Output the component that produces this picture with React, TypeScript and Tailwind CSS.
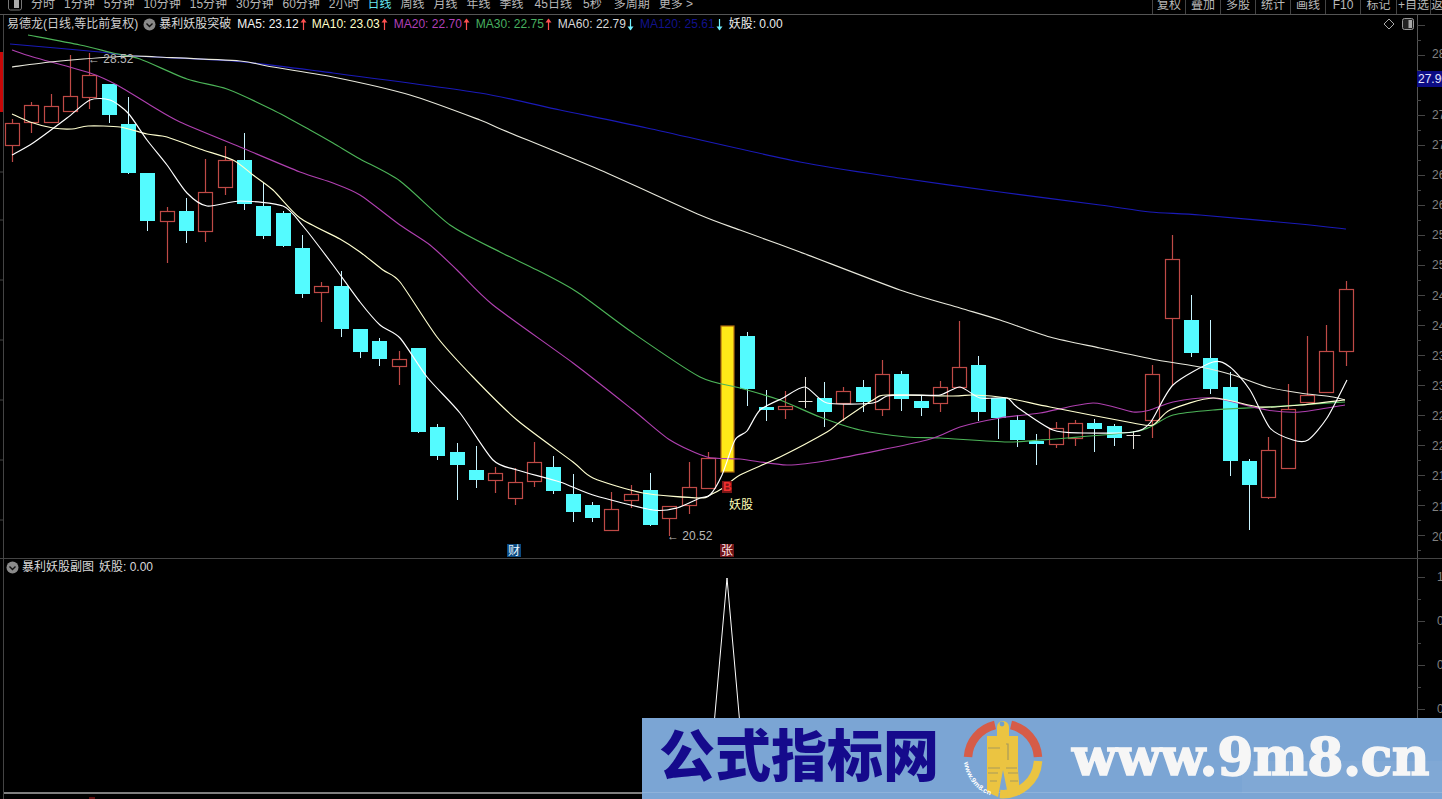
const C: [string, number, number, number, number][] = [
["r",119,123,145,162],["r",102,105,122,133],["r",94,106,122,122],["r",55,96,111,111],["r",53,75,97,109],
["c",84,84,115,123],["c",97,124,173,174],["c",173,173,221,231],["r",207,211,221,263],["c",198,211,231,243],
["r",159,192,231,242],["r",146,160,187,195],["c",133,160,204,210],["c",183,206,236,239],["c",211,213,246,247],
["c",235,248,294,298],["r",282,286,292,322],["c",271,286,329,337],["c",329,329,352,358],["c",338,341,359,366],
["r",351,359,366,385],["c",348,348,432,433],["c",424,427,456,460],["c",443,452,465,500],["c",446,470,480,488],
["r",467,473,480,493],["r",468,482,498,505],["r",442,462,481,487],["c",456,467,491,494],["c",474,494,512,522],
["c",502,505,518,522],["r",492,509,530,530],["r",485,494,500,508],["c",473,490,525,526],["r",506,506,518,536],
["r",462,487,505,514],["r",452,458,488,488],["y",326,326,472,472],["c",332,336,389,406],["c",390,407,410,421],
["r",391,406,409,419],["d",377,401,401,408],["c",382,398,412,427],["r",387,391,403,421],["c",380,387,402,412],
["r",360,374,409,416],["c",371,374,399,411],["c",396,401,408,416],["r",381,387,403,412],["r",321,367,387,387],
["c",356,365,412,421],["c",398,398,418,439],["c",415,420,440,447],["c",434,441,444,465],["r",422,428,444,448],
["r",420,423,438,446],["c",419,423,429,452],["c",424,426,438,446],["d",431,435,435,449],["r",365,374,420,438],
["r",235,259,318,385],["c",295,320,353,357],["c",320,358,389,394],["c",372,387,461,476],["c",459,461,485,530],
["r",437,450,497,499],["r",384,409,468,468],["r",336,395,402,402],["r",325,351,392,392],["r",281,289,351,366],
];

const MA120 = "10,44 100,52 133,56 233,61 333,73 480,93 560,110 647,128 800,162 900,178 1000,192 1100,205 1150,212 1200,215 1300,224 1346,229";
const MA60 = "12,67 50,62 83,59 133,56 157,57 240,61 267,66 333,77 410,95 480,120 503,130 600,170 700,215 740,230 800,252 900,290 960,308 1000,320 1050,337 1100,348 1157,360 1200,367 1233,375 1267,387 1300,393 1333,397 1345,400";
const MA30 = "28,35 80,45 113,53 140,59 187,79 227,89 273,110 310,130 333,143 360,159 400,181 450,225 500,252 537,270 577,292 633,333 700,377 740,388 780,400 820,417 860,430 907,437 940,438 1007,442 1040,440 1067,438 1133,432 1150,427 1173,415 1213,410 1267,407 1345,402";
const MA20 = "12,50 33,57 90,73 117,85 150,105 180,122 240,147 300,172 333,183 360,195 400,225 430,245 457,270 493,305 573,363 633,410 670,440 707,457 740,459 787,465 830,460 927,440 960,427 1000,418 1040,413 1093,403 1133,412 1150,410 1173,402 1213,398 1267,410 1300,412 1345,405";
const MA10 = "12,114 30,122 53,128 72,129 88,126 120,127 147,134 167,137 200,149 233,160 253,175 273,190 300,218 340,239 360,252 383,270 400,282 437,337 473,377 517,420 573,462 593,478 643,493 700,498 710,495 723,488 740,475 780,457 827,432 840,422 873,400 887,395 953,396 973,395 1007,398 1050,407 1133,423 1153,425 1170,410 1213,398 1260,407 1300,405 1345,400";
const MA5 = "12,155 33,143 67,118 90,100 110,100 128,113 147,140 167,165 187,193 207,206 240,201 283,206 303,226 333,265 360,302 380,325 400,338 427,377 460,413 493,460 517,470 560,482 593,495 653,510 677,508 700,498 710,495 722,475 735,440 747,431 760,410 783,398 805,387 827,403 873,403 887,396 910,395 940,395 960,387 980,398 1007,398 1017,407 1053,430 1083,433 1133,432 1150,423 1173,385 1213,362 1230,367 1250,390 1270,428 1293,440 1308,440 1327,418 1347,380";

const upperLabels: [string, number][] = [["28",54],["27",115],["27",145],["26",175],["26",205],["25",235],["25",265],["24",296],["24",326],["23",356],["23",386],["22",416],["22",446],["21",476],["21",507],["20",537]];

const sans = "font-['Liberation_Sans','Noto_Sans_CJK_SC',sans-serif]";

function smooth(pts: string) {
  const p = pts.split(" ").map((s) => s.split(",").map(Number));
  let d = `M${p[0][0]} ${p[0][1]}`;
  for (let i = 0; i < p.length - 1; i++) {
    const a = p[Math.max(i - 1, 0)], b = p[i], c = p[i + 1], e = p[Math.min(i + 2, p.length - 1)];
    const k = 1 / 8;
    d += ` C${b[0] + (c[0] - a[0]) * k} ${b[1] + (c[1] - a[1]) * k} ${c[0] - (e[0] - b[0]) * k} ${c[1] - (e[1] - b[1]) * k} ${c[0]} ${c[1]}`;
  }
  return d;
}

function Arrow({ up }: { up: boolean }) {
  const color = up ? "#ff5050" : "#70f0ff";
  return (
    <svg width="7" height="13" viewBox="0 0 7 13" className="block shrink-0">
      <line x1="3.5" y1="1" x2="3.5" y2="12" stroke={color} strokeWidth="1.2" />
      {up ? <path d="M0.5 4.5 L3.5 0.5 L6.5 4.5 Z" fill={color} /> : <path d="M0.5 8.5 L3.5 12.5 L6.5 8.5 Z" fill={color} />}
    </svg>
  );
}

function Chevron() {
  return (
    <svg width="13" height="13" viewBox="0 0 13 13" className="block shrink-0">
      <circle cx="6.5" cy="6.5" r="6" fill="#8a8a8a" />
      <path d="M3.5 5.5 L6.5 8.5 L9.5 5.5" fill="none" stroke="#111" strokeWidth="1.4" />
    </svg>
  );
}

function Candles() {
  return (
    <>
      {C.map(([t, wt, bt, bb, wb], i) => {
        const x = Math.round(12 + i * 19.33) + 0.5;
        if (t === "y") return <rect key={i} x={x - 6.5} y={bt} width={13} height={bb - bt} fill="#ffe818" stroke="#b06a10" strokeWidth="1.2" />;
        if (t === "d") return (
          <g key={i} stroke="#e6e0d8" strokeWidth="1">
            <line x1={x} y1={wt} x2={x} y2={wb} />
            <line x1={x - 7} y1={bt + 0.5} x2={x + 7} y2={bt + 0.5} />
          </g>
        );
        if (t === "c") return (
          <g key={i}>
            <line x1={x} y1={wt} x2={x} y2={wb} stroke="#c8f4ff" strokeWidth="1" />
            <rect x={x - 7.5} y={bt} width={15} height={bb - bt} fill="#54fbff" />
          </g>
        );
        return (
          <g key={i} stroke="#bf4a46" strokeWidth="1.2">
            <line x1={x} y1={wt} x2={x} y2={bt} />
            <line x1={x} y1={bb} x2={x} y2={wb} />
            <rect x={x - 7} y={bt + 0.5} width={14} height={bb - bt} fill="none" />
          </g>
        );
      })}
    </>
  );
}

function Line({ pts, color }: { pts: string; color: string }) {
  return <path d={smooth(pts)} fill="none" stroke={color} strokeWidth="1.15" />;
}

function Ticks({ from, to, step }: { from: number; to: number; step: number }) {
  const items = [];
  for (let y = from, i = 0; y <= to; y += step, i++) {
    items.push(<line key={y} x1="0" x2={i % 2 === 0 ? 8 : 4} y1={y + 0.5} y2={y + 0.5} stroke="#444" />);
  }
  return <>{items}</>;
}

const left = ["分时","1分钟","5分钟","10分钟","15分钟","30分钟","60分钟","2小时","日线","周线","月线","年线","季线","45日线","5秒","多周期","更多 >"];
const right: [string, string][] = [["复权","w-[33px]"],["叠加","w-[35px]"],["多股","w-[35px]"],["统计","w-[35px]"],["画线","w-[35px]"],["F10","w-[35px]"],["标记","w-[36px]"],["+自选","w-[34px]"],["返","w-[12px]"]];

const legend: [string, string, boolean, string][] = [
  ["MA5: 23.12", "text-[#f4f4f4]", true, "ml-[6px]"],
  ["MA10: 23.03", "text-[#ffffc8]", true, "ml-[5px]"],
  ["MA20: 22.70", "text-[#b040b8]", true, "ml-[6px]"],
  ["MA30: 22.75", "text-[#48b060]", true, "ml-[6px]"],
  ["MA60: 22.79", "text-[#d8d8d8]", false, "ml-[6px]"],
  ["MA120: 25.61", "text-[#12128c]", false, "ml-[6px]"],
];

export default function App() {
  return (
    <div className={`relative flex h-[799px] w-[1442px] flex-col overflow-hidden bg-black text-[12px] ${sans}`}>
      {/* toolbar */}
      <div className="flex h-[15px] shrink-0 items-start justify-between overflow-hidden border-b border-[#555]">
        <div className="flex items-start">
          <svg width="14" height="12" viewBox="0 0 14 12" className="ml-[8px] block shrink-0">
            <rect x="0.5" y="-3" width="13" height="13" rx="2" fill="none" stroke="#777" />
            <rect x="6" y="-1" width="5" height="9" fill="#aaa" />
          </svg>
          <div className="ml-[9px] -mt-[3px] flex gap-[9px] leading-[14px] text-[#b8b8b8]">
            {left.map((l) => (
              <span key={l} className={`whitespace-pre ${l === "日线" ? "-ml-[1px] text-[#66e6f0]" : ""} ${l === "45日线" || l === "5秒" ? "ml-[2px]" : ""} ${l === "多周期" ? "ml-[3px]" : ""}`}>{l}</span>
            ))}
          </div>
        </div>
        <div className="flex h-[14px] shrink-0">
          {right.map(([l, w]) => (
            <div key={l} className={`${w} h-[14px] overflow-hidden whitespace-nowrap border-l border-[#444] text-center leading-[10px] text-[#b8b8b8]`}>{l}</div>
          ))}
        </div>
      </div>

      {/* upper pane */}
      <div className="relative flex h-[544px] shrink-0 border-b border-[#444]">
        <svg width="4" height="543" viewBox="0 15 4 543" className="block shrink-0">
          <rect x="0" y="52" width="3" height="60" fill="#c80808" />
          <line x1="3.5" y1="15" x2="3.5" y2="558" stroke="#444" />
          {[172, 220, 280, 340, 400, 460, 520].map((y) => <line key={y} x1="0" x2="3" y1={y} y2={y} stroke="#444" />)}
        </svg>
        <svg width="1413" height="543" viewBox="4 15 1413 543" className="block shrink-0">
          <Candles />
          <Line pts={MA120} color="#1a1ab8" />
          <Line pts={MA30} color="#4cb458" />
          <Line pts={MA20} color="#b040b0" />
          <Line pts={MA60} color="#e8e8dc" />
          <Line pts={MA10} color="#ffffd0" />
          <Line pts={MA5} color="#ffffff" />
          <g fontFamily="'Liberation Sans','Noto Sans CJK SC',sans-serif" fontSize="12">
            <text x="88" y="63" fill="#b8b8b8">← 28.52</text>
            <text x="667" y="540" fill="#b8b8b8">← 20.52</text>
            <rect x="722" y="481" width="10" height="12" fill="#7a1616" />
            <text x="723" y="491" fontSize="12" fontWeight="700" fill="#f03030">B</text>
            <text x="729" y="509" fill="#ffffb8">妖股</text>
            <rect x="507" y="544" width="14" height="13" fill="#0c4a80" />
            <text x="508" y="555" fill="#e8f4ff">财</text>
            <rect x="720" y="544" width="14" height="13" fill="#701418" />
            <text x="721" y="555" fill="#ffe8e8">张</text>
          </g>
        </svg>
        <svg width="25" height="543" viewBox="0 15 25 543" className="block shrink-0">
          <line x1="0.5" y1="15" x2="0.5" y2="558" stroke="#555" />
          <Ticks from={25} to={550} step={15} />
          <g fontFamily="'Liberation Sans',sans-serif" fontSize="12" fill="#808080">
            {upperLabels.map(([t, y], i) => <text key={i} x="15" y={y + 4}>{t}.50</text>)}
          </g>
          <rect x="0" y="71" width="25" height="16" fill="#0c0c84" />
          <text x="1" y="83" fontFamily="'Liberation Sans',sans-serif" fontSize="12" fill="#e6e6ff">27.96</text>
        </svg>

        {/* legend overlaid on the chart */}
        <div className="absolute left-[7px] top-[3px] flex h-[13px] items-center whitespace-nowrap leading-[13px]">
          <span className="text-[#cfcfcf]">易德龙(日线,等比前复权)</span>
          <span className="ml-[5px]"><Chevron /></span>
          <span className="ml-[3px] text-[#d8d8d8]">暴利妖股突破</span>
          {legend.map(([t, c, up, m]) => (
            <span key={t} className={`flex items-center ${m}`}>
              <span className={c}>{t}</span>
              <span className="ml-[1px]"><Arrow up={up} /></span>
            </span>
          ))}
          <span className="ml-[6px] text-[#ececec]">妖股: 0.00</span>
        </div>
        <div className="absolute left-[1383px] top-[3px] flex items-center gap-[7px]">
          <svg width="12" height="12" viewBox="0 0 12 12" className="block"><path d="M6 1 L11 6 L6 11 L1 6 Z" fill="none" stroke="#a8a8a8" /></svg>
          <svg width="12" height="12" viewBox="0 0 12 12" className="block"><rect x="0.5" y="0.5" width="11" height="11" rx="2" fill="#222" stroke="#999" /><rect x="6.5" y="2" width="3.5" height="8" fill="#a8a8a8" /></svg>
        </div>
      </div>

      {/* lower pane */}
      <div className="relative flex min-h-0 flex-1">
        <svg width="4" height="240" viewBox="0 559 4 240" className="block shrink-0">
          <line x1="3.5" y1="559" x2="3.5" y2="799" stroke="#444" />
        </svg>
        <svg width="1413" height="240" viewBox="4 559 1413 240" className="block shrink-0">
          <polyline points="4,793 708,793 727,578 746,793 1417,793" fill="none" stroke="#ffffff" strokeWidth="1" />
          <line x1="89" x2="95" y1="798" y2="798" stroke="#c02020" />
        </svg>
        <svg width="25" height="240" viewBox="0 559 25 240" className="block shrink-0">
          <line x1="0.5" y1="559" x2="0.5" y2="799" stroke="#555" />
          <Ticks from={577} to={709} step={22} />
          <g fontFamily="'Liberation Sans',sans-serif" fontSize="12" fill="#808080">
            <text x="20" y="581">1.00</text>
            <text x="20" y="625">0.80</text>
            <text x="20" y="669">0.60</text>
            <text x="20" y="713">0.40</text>
          </g>
        </svg>
        <div className="absolute left-[6px] top-[2px] flex h-[13px] items-center whitespace-nowrap leading-[13px] text-[#d8d8d8]">
          <Chevron />
          <span className="ml-[3px]">暴利妖股副图</span>
          <span className="ml-[5px]">妖股: 0.00</span>
        </div>
      </div>

      {/* watermark banner */}
      <div className="absolute left-[642px] top-[718px] flex h-[81px] w-[800px] items-center overflow-hidden bg-[#7ba5d4]">
        <div className="absolute left-0 right-0 top-[74px] h-px bg-white/15" />
        <div className="absolute bottom-[6px] right-0 h-[32px] w-[200px] bg-white/[0.04]" />
        <span className="relative mb-[13px] ml-[17px] w-[278px] whitespace-nowrap font-['Noto_Sans_CJK_SC',sans-serif] text-[56px] font-black leading-[68px] text-[#150a8c]">公式指标网</span>
        <svg width="80" height="81" viewBox="963 718 80 81" className="relative ml-[26px] block shrink-0">
          <path d="M968 757 A35 35 0 0 1 995 725" fill="none" stroke="#d65c48" strokeWidth="8.5" />
          <path d="M1011 725 A35 35 0 0 1 1038 757" fill="none" stroke="#d65c48" strokeWidth="8.5" />
          <path d="M1038 761 A35 35 0 0 1 1000 794" fill="none" stroke="#ebc441" strokeWidth="8.5" />
          <path d="M987 736 H997 V727 A5 5 0 0 1 1009 727 V736 H1018 V770 L1020 795 L1008 795 L1003 770 L998 797 L987 792 Z" fill="#ebc441" />
          <circle cx="1002" cy="724" r="2.4" fill="#6f9fcf" />
          <path d="M988 748 H1000 M1006 744 H1008 V760 M988 768 H1000 M1006 768 H1017 M988 773 H998 M1008 773 H1018 M990 781 H997 M1010 781 H1018" fill="none" stroke="#a89a5c" strokeWidth="1.2" />
          <defs><path id="ringText" d="M966 762 A38 38 0 0 0 996 795" /></defs>
          <text fontFamily="'Liberation Sans',sans-serif" fontSize="7" fontWeight="700" fill="#ffffff" dy="2"><textPath href="#ringText">www.9m8.cn</textPath></text>
        </svg>
        <span className="relative mb-[4px] ml-[29px] whitespace-nowrap font-['DejaVu_Serif',serif] text-[52px] font-bold leading-[68px] tracking-[-0.5px] text-[#f6f6f6] [-webkit-text-stroke:1.5px_#f6f6f6]">www.9m8.cn</span>
      </div>
    </div>
  );
}
